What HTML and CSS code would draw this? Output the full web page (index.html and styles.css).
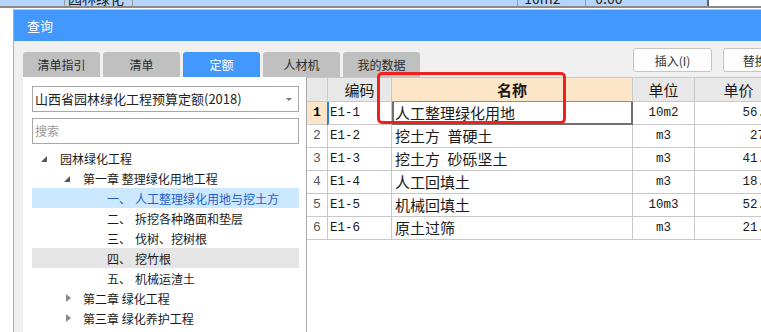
FILE: index.html
```html
<!DOCTYPE html>
<html lang="zh-CN">
<head>
  <meta charset="UTF-8">
  <meta name="viewport" content="width=device-width, initial-scale=1.0">
  <title>查询</title>
  <link rel="stylesheet" href="styles.css">
</head>
<body>
  <div class="backdrop">
    <div class="bcell w65"></div>
    <div class="bcell w68"><span>园林绿化</span></div>
    <div class="bcell w385"></div>
    <div class="bcell w68"><span>&nbsp;10m2</span></div>
    <div class="bcell w123"><span>&nbsp;&nbsp;0.00</span></div>
    <div class="bcell blank"></div>
  </div>
  <div class="sep"></div>

  <div class="desk">
    <div class="dialog">
      <div class="titlebar">查询</div>
      <div class="dlg-body">
        <div class="toolbar">
          <div class="tabs">
            <div class="tab">清单指引</div>
            <div class="tab">清单</div>
            <div class="tab active">定额</div>
            <div class="tab">人材机</div>
            <div class="tab">我的数据</div>
          </div>
          <div class="actions">
            <button class="btn">插入(I)</button>
            <button class="btn">替换(R)</button>
          </div>
        </div>

        <div class="main">
          <div class="side">
            <div class="combo">山西省园林绿化工程预算定额(2018)<span class="caret"></span></div>
            <div class="search">搜索</div>
            <ul class="tree">
              <li class="node lv0"><span class="tog open"></span>园林绿化工程</li>
              <li class="node lv1"><span class="tog open"></span>第一章 整理绿化用地工程</li>
              <li class="node lv2 selected"><span class="tog"></span><span class="num">一、</span>人工整理绿化用地与挖土方</li>
              <li class="node lv2"><span class="tog"></span><span class="num">二、</span>拆挖各种路面和垫层</li>
              <li class="node lv2"><span class="tog"></span><span class="num">三、</span>伐树、挖树根</li>
              <li class="node lv2 hover"><span class="tog"></span><span class="num">四、</span>挖竹根</li>
              <li class="node lv2"><span class="tog"></span><span class="num">五、</span>机械运渣土</li>
              <li class="node lv1"><span class="tog closed"></span>第二章 绿化工程</li>
              <li class="node lv1"><span class="tog closed"></span>第三章 绿化养护工程</li>
            </ul>
          </div>

          <div class="grid">
            <div class="row head">
              <div class="cell"></div>
              <div class="cell center">编码</div>
              <div class="cell center name-head">名称</div>
              <div class="cell center">单位</div>
              <div class="cell center">单价</div>
            </div>
            <div class="row current">
              <div class="cell idx">1</div>
              <div class="cell code">E1-1</div>
              <div class="cell name">人工整理绿化用地</div>
              <div class="cell unit">10m2</div>
              <div class="cell price">56.84</div>
            </div>
            <div class="row">
              <div class="cell idx">2</div>
              <div class="cell code">E1-2</div>
              <div class="cell name">挖土方&ensp;普硬土</div>
              <div class="cell unit">m3</div>
              <div class="cell price">27.8</div>
            </div>
            <div class="row">
              <div class="cell idx">3</div>
              <div class="cell code">E1-3</div>
              <div class="cell name">挖土方&ensp;砂砾坚土</div>
              <div class="cell unit">m3</div>
              <div class="cell price">41.52</div>
            </div>
            <div class="row">
              <div class="cell idx">4</div>
              <div class="cell code">E1-4</div>
              <div class="cell name">人工回填土</div>
              <div class="cell unit">m3</div>
              <div class="cell price">18.36</div>
            </div>
            <div class="row">
              <div class="cell idx">5</div>
              <div class="cell code">E1-5</div>
              <div class="cell name">机械回填土</div>
              <div class="cell unit">10m3</div>
              <div class="cell price">52.47</div>
            </div>
            <div class="row">
              <div class="cell idx">6</div>
              <div class="cell code">E1-6</div>
              <div class="cell name">原土过筛</div>
              <div class="cell unit">m3</div>
              <div class="cell price">21.08</div>
            </div>
          </div>
        </div>
      </div>
    </div>
  </div>

  <div class="callout"></div>
</body>
</html>
```

FILE: styles.css
```css
html, body {
  margin: 0;
  height: 332px;
  overflow: hidden;
}

body {
  position: relative;
  width: 761px;
  background: #ffffff;
  font-family: "Noto Sans CJK SC", "Liberation Sans", sans-serif;
  color: #1a1a1a;
}

/* window behind the dialog */
.backdrop {
  display: flex;
  height: 6px;
  overflow: hidden;
  background: #b6d5fb;
}

.bcell {
  flex: none;
  box-sizing: border-box;
  height: 6px;
  border-right: 1px solid #9a9a9a;
  font-size: 14px;
  line-height: 14px;
  color: #222;
  white-space: nowrap;
}

.bcell span {
  display: block;
  margin-top: -9px;
  padding-left: 3px;
}

.w65 { width: 65px; }
.w68 { width: 68px; }
.w385 { width: 385px; }
.w123 { width: 123px; border-right: 2px solid #666; }
.bcell.blank { flex: 1; background: #ffffff; border: none; }

.sep {
  height: 2px;
  background: #8a8a8a;
}

.desk {
  padding: 1px 0 0 13px;
}

.dialog {
  width: 800px;
  border-left: 1px solid #b0b0b0;
  border-top: 1px solid #c8c8c8;
}

.titlebar {
  height: 31px;
  line-height: 31px;
  padding-left: 13px;
  background: #4298fd;
  color: #ffffff;
  font-size: 13px;
}

.dlg-body {
  background: #f0f0f0;
  padding: 7px 0 0 9px;
}

.toolbar {
  display: flex;
  align-items: flex-start;
  height: 29px;
}

.tabs {
  display: flex;
  gap: 3px;
  margin-top: 4px;
}

.tab {
  width: 77px;
  height: 25px;
  line-height: 25px;
  text-align: center;
  font-size: 12px;
  color: #2a2a2a;
  background: #c0c0c0;
  border-radius: 3px 3px 0 0;
}

.tab.active {
  background: #4298fd;
  color: #ffffff;
}

.actions {
  display: flex;
  gap: 11px;
  margin-left: 213px;
}

.btn {
  width: 79px;
  height: 24px;
  padding: 0;
  font-family: inherit;
  font-size: 12px;
  color: #333;
  background: #fdfdfd;
  border: 1px solid #c4c4c4;
  border-radius: 3px;
}

.main {
  display: flex;
  height: 255px;
}

.side {
  width: 283px;
  box-sizing: border-box;
  padding: 9px 7px 0 9px;
  background: #ffffff;
}

.combo {
  position: relative;
  height: 26px;
  box-sizing: border-box;
  border: 1px solid #a8a8a8;
  padding-left: 2px;
  font-size: 13px;
  line-height: 24px;
  color: #222;
}

.caret {
  position: absolute;
  right: 6px;
  top: 11px;
  border-style: solid;
  border-width: 3px 3px 0 3px;
  border-color: #777 transparent transparent transparent;
}

.search {
  height: 26px;
  box-sizing: border-box;
  margin-top: 6px;
  border: 1px solid #a8a8a8;
  padding-left: 2px;
  font-size: 12px;
  line-height: 24px;
  color: #9a9a9a;
}

.tree {
  list-style: none;
  margin: 4px 0 0;
  padding: 0;
}

.node {
  display: flex;
  align-items: center;
  height: 20px;
  font-size: 12px;
  color: #1a1a1a;
  white-space: nowrap;
}

.lv0 { padding-left: 9px; }
.lv1 { padding-left: 32px; }
.lv2 { padding-left: 56px; }

.node.selected {
  background: #cce8ff;
  color: #1f5fc8;
}

.node.hover {
  background: #e5e5e5;
}

.tog {
  flex: none;
  width: 19px;
  height: 20px;
  position: relative;
}

.tog.open::before {
  content: "";
  position: absolute;
  left: 0;
  top: 8px;
  border-style: solid;
  border-width: 0 0 6px 6px;
  border-color: transparent transparent #595959 transparent;
}

.tog.closed::before {
  content: "";
  position: absolute;
  left: 2px;
  top: 6px;
  border-style: solid;
  border-width: 4px 0 4px 5px;
  border-color: transparent transparent transparent #8a8a8a;
}

.num {
  width: 28px;
  flex: none;
}

/* result grid */
.grid {
  flex: 1;
  border-left: 1px solid #a8a8a8;
  border-top: 1px solid #c8c8c8;
  background: #ffffff;
}

.row {
  display: grid;
  grid-template-columns: 21px 64px 241px 62px 88px;
  height: 23px;
}

.row.head {
  height: 24px;
}

.cell {
  box-sizing: border-box;
  border-right: 1px solid #c8c8c8;
  border-bottom: 1px solid #c8c8c8;
  font-size: 15px;
  line-height: 22px;
  white-space: nowrap;
  overflow: hidden;
}

.head .cell {
  background: #e8e8e8;
  line-height: 23px;
  color: #1a1a1a;
}

.head .name-head {
  background: #fde6c8;
  font-weight: bold;
  border-bottom-color: #5b9bd5;
}

.center { text-align: center; }

.idx {
  text-align: center;
  font-family: "Liberation Mono", monospace;
  font-size: 13px;
  color: #555;
}

.code {
  padding-left: 2px;
  font-family: "Liberation Mono", monospace;
  font-size: 12.5px;
}

.name {
  padding-left: 3px;
}

.unit {
  text-align: center;
  font-family: "Liberation Mono", monospace;
  font-size: 12.5px;
}

.price {
  text-align: right;
  padding-right: 2px;
  font-family: "Liberation Mono", monospace;
  font-size: 12.5px;
}

.current .idx {
  background: #fde6c8;
  color: #000;
  font-weight: bold;
}

.current .code {
  box-shadow: -1px 0 #2a7ae2, inset 1px 0 #2a7ae2;
}

.current .name {
  border-right-color: #707070;
  border-bottom-color: #707070;
  box-shadow: inset 2px 0 #707070, inset -1px 0 #707070, inset 0 -1px #707070;
}

/* annotation drawn over the screenshot */
.callout {
  position: absolute;
  left: 377px;
  top: 72px;
  width: 189px;
  height: 52px;
  box-sizing: border-box;
  border: 3px solid #f0201c;
  border-radius: 5px;
}
```
